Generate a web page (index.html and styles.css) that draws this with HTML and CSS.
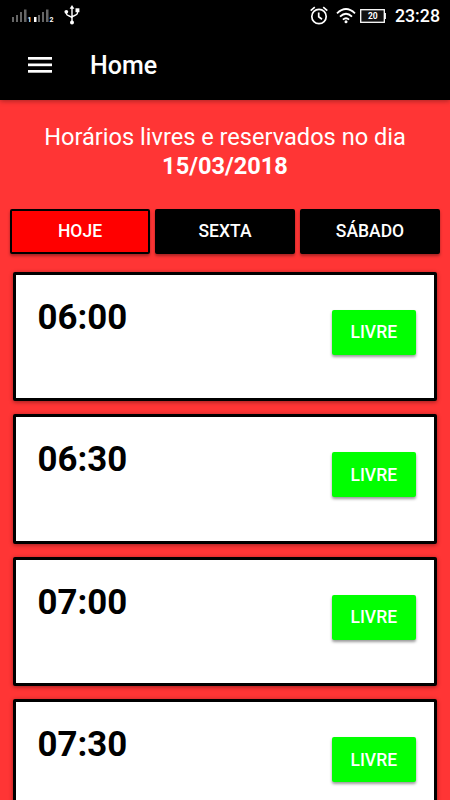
FILE: index.html
```html
<!DOCTYPE html>
<html lang="pt-BR">
<head>
    <meta charset="UTF-8">
    <meta name="viewport" content="width=device-width, initial-scale=1.0">
    <title>Home</title>
    <link rel="stylesheet" href="styles.css">
</head>
<body>
    <div class="statusbar">
        <svg class="signal" width="43" height="14" viewBox="0 0 43 14">
            <g fill="#666">
                <rect x="1" y="8" width="2" height="5"/>
                <rect x="5" y="6" width="2" height="7"/>
                <rect x="9" y="3" width="2" height="10"/>
                <rect x="13" y="0.500" width="2.500" height="12.500"/>
                <rect x="27" y="6" width="2" height="7"/>
                <rect x="31" y="3" width="2" height="10"/>
                <rect x="35" y="0.500" width="2.500" height="12.500"/>
            </g>
            <rect x="23" y="8" width="2.500" height="5" fill="#fff"/>
            <text x="16.500" y="13" class="sim">1</text>
            <text x="38.500" y="13" class="sim">2</text>
        </svg>
        <svg class="usb" width="16" height="20" viewBox="0 0 16 20" fill="#fff">
            <path d="M8 2v15M2.300 7v1.500c0 2.800 5.700 2.200 5.700 4.800M13.500 5v3c0 2.800-5.500 2.200-5.500 4.800" fill="none" stroke="#fff" stroke-width="1.400"/>
            <path d="M8 0l2.400 3.800H5.600z"/>
            <circle cx="2.300" cy="6.800" r="1.900"/>
            <rect x="11.500" y="3.300" width="3.900" height="3.900"/>
            <circle cx="8" cy="17.500" r="2"/>
        </svg>
        <div class="status-right">
            <svg class="alarm" width="18" height="19" viewBox="0 0 18 19" fill="none" stroke="#fff" stroke-width="1.700">
                <circle cx="9" cy="10.500" r="7.200"/>
                <path d="M8.700 6.500v4.300l3.300 2.500M0.700 4.600L4.800 1.200M17.300 4.600L13.200 1.200"/>
            </svg>
            <svg class="wifi" width="20" height="17" viewBox="0 0 20 17" fill="none" stroke="#fff" stroke-width="1.800">
                <path d="M1 6.300q9-8.600 18 0M4 9.700q6-5.800 12 0M6.900 12.700q3.100-3 6.200 0"/>
                <circle cx="10" cy="14.800" r="1.500" fill="#fff" stroke="none"/>
            </svg>
            <svg class="battery" width="26" height="14" viewBox="0 0 26 14">
                <rect x="0.700" y="0.700" width="23.600" height="12.600" fill="#111" stroke="#fff" stroke-width="1.300"/>
                <rect x="24.300" y="4" width="1.600" height="6" fill="#fff"/>
                <text x="12.800" y="10.300" class="level">20</text>
            </svg>
            <span class="clock">23:28</span>
        </div>
    </div>

    <header class="toolbar">
        <svg class="menu" width="24" height="16" viewBox="0 0 24 16" fill="#fff">
            <rect x="0" y="0" width="24" height="2.700"/>
            <rect x="0" y="6.500" width="24" height="2.700"/>
            <rect x="0" y="13" width="24" height="2.700"/>
        </svg>
        <h1>Home</h1>
    </header>

    <main class="content">
        <p class="intro">Horários livres e reservados no dia<br><b>15/03/2018</b></p>

        <div class="days">
            <button class="day active">HOJE</button>
            <button class="day">SEXTA</button>
            <button class="day">SÁBADO</button>
        </div>

        <div class="slots">
            <div class="card">
                <span class="time">06:00</span>
                <button class="free">LIVRE</button>
            </div>
            <div class="card">
                <span class="time">06:30</span>
                <button class="free">LIVRE</button>
            </div>
            <div class="card">
                <span class="time">07:00</span>
                <button class="free">LIVRE</button>
            </div>
            <div class="card">
                <span class="time">07:30</span>
                <button class="free">LIVRE</button>
            </div>
        </div>
    </main>
</body>
</html>
```
FILE: styles.css
```css
* {
    box-sizing: border-box;
}
body {
    margin: 0;
    height: 800px;
    overflow: hidden;
    display: flex;
    flex-direction: column;
    background: #ff3535;
    color: #fff;
    font-family: Roboto, sans-serif;
}
.statusbar {
    flex: none;
    height: 32px;
    padding: 0 10px 0 11px;
    display: flex;
    align-items: center;
    background: #000;
}
.signal {
    margin-bottom: 1px;
}
.sim {
    font-size: 7px;
    font-weight: 700;
    fill: #fff;
}
.usb {
    margin-left: 10px;
    margin-top: -2px;
}
.status-right {
    margin-left: auto;
    display: flex;
    align-items: center;
}
.alarm {
    margin-right: 8px;
    margin-top: -2px;
}
.wifi {
    margin-right: 4px;
    margin-top: -1px;
}
.battery {
    margin-right: 9px;
    margin-top: -1px;
}
.level {
    font-size: 8.5px;
    font-weight: 700;
    fill: #fff;
    text-anchor: middle;
}
.clock {
    font-size: 17.8px;
    font-weight: 500;
    line-height: 32px;
}
.toolbar {
    flex: none;
    height: 68px;
    padding: 0 28px 2px;
    display: flex;
    align-items: center;
    background: #000;
    box-shadow: 0 1px 5px rgba(0, 0, 0, 0.35);
}
.toolbar h1 {
    margin: 0 0 0 38px;
    font-size: 25px;
    font-weight: 500;
}
.content {
    padding: 23px 10px 0;
}
.intro {
    margin: 0;
    text-align: center;
    font-size: 23.6px;
    line-height: 28.5px;
}
.days {
    display: flex;
    gap: 5px;
    margin-top: 29px;
}
.day {
    flex: 1;
    height: 44.5px;
    padding: 0 0 1px;
    border: 2px solid #000;
    border-radius: 2px;
    background: #000;
    color: #fff;
    font: 500 17.5px Roboto, sans-serif;
    box-shadow: 0 2px 3px rgba(0, 0, 0, 0.35);
}
.day.active {
    background: #f00;
}
.slots {
    margin: 18px 3px 0;
    display: flex;
    flex-direction: column;
    gap: 13px;
}
.card {
    height: 129.5px;
    padding: 22px 18px 0 21.5px;
    display: flex;
    justify-content: space-between;
    align-items: flex-start;
    background: #fff;
    border: 3px solid #000;
    border-radius: 2px;
    box-shadow: 0 1px 4px rgba(0, 0, 0, 0.4);
}
.time {
    color: #000;
    font-size: 34.8px;
    font-weight: 700;
    line-height: 41px;
}
.free {
    width: 84.5px;
    height: 45px;
    margin-top: 13px;
    padding: 0;
    border: none;
    border-radius: 2px;
    background: #0f0;
    color: #fff;
    font: 500 17.5px Roboto, sans-serif;
    box-shadow: 0 2px 3px rgba(0, 0, 0, 0.4);
}
```
